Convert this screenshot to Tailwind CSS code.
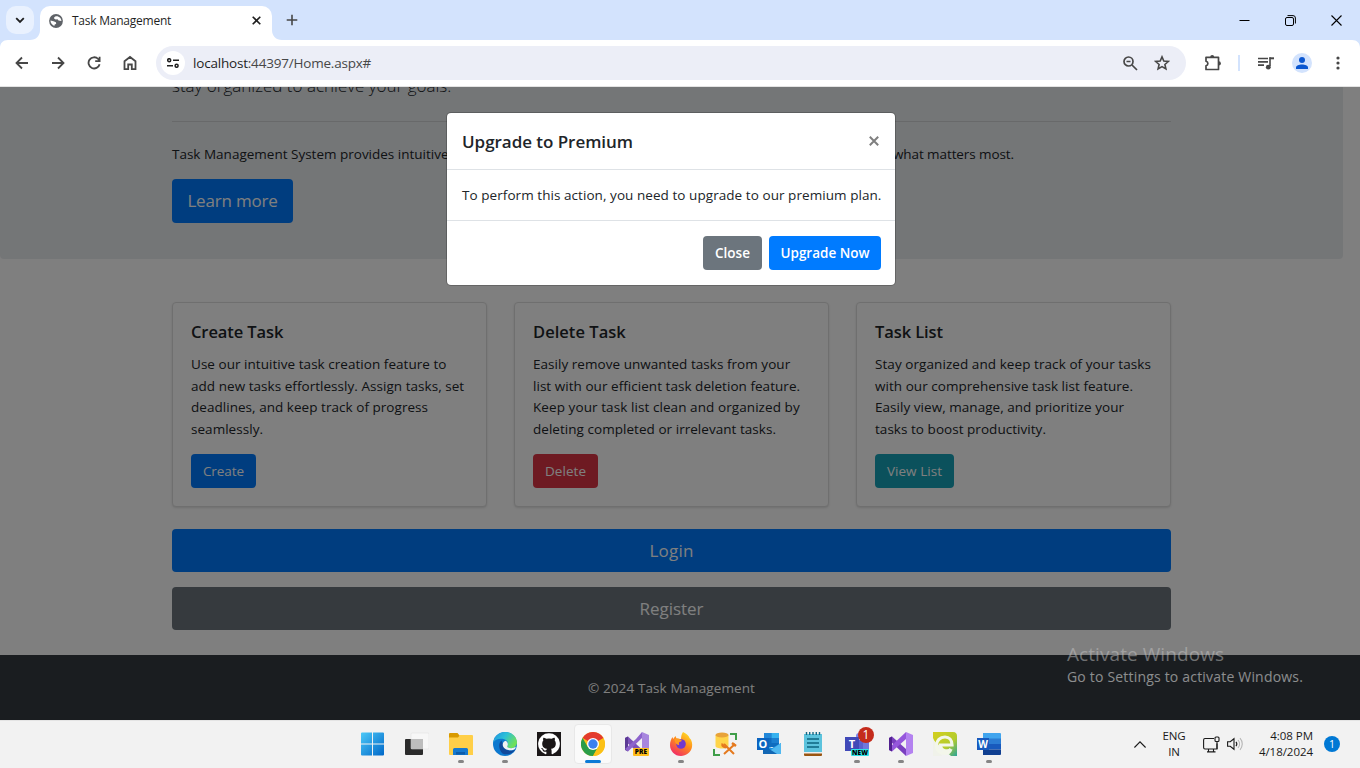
<!DOCTYPE html>
<html lang="en">
<head>
<meta charset="utf-8">
<title>Task Management</title>
<script src="https://cdn.jsdelivr.net/npm/@tailwindcss/browser@4"></script>
</head>
<body class="w-[1360px] h-[768px] overflow-hidden flex flex-col font-['Open_Sans','Noto_Sans',sans-serif] text-[13.5px] tracking-[0.04px] text-[#212529] whitespace-nowrap bg-white">

<!-- Tab strip -->
<header class="h-10 shrink-0 bg-[#d3e3fd] flex items-end">
  <div class="w-10 h-10 flex items-center justify-center relative">
    <div class="w-7 h-7 rounded-[10px] bg-[#e9f1fe] flex items-center justify-center">
      <svg class="w-[10px] h-[10px]" viewBox="0 0 10 10" fill="none" stroke="#1f1f1f" stroke-width="1.8"><path d="M1.2 3.2 5 7l3.800-3.800"/></svg>
    </div>
    <svg class="absolute right-0 bottom-0 w-[10px] h-[10px]" viewBox="0 0 10 10" fill="#fff"><path d="M10 0v10H0C6 10 10 6 10 0z"/></svg>
    <svg class="absolute left-0 -bottom-[8px] w-2 h-2 z-10" viewBox="0 0 8 8" fill="#d3e3fd"><path d="M0 0h8C3 0 0 3 0 8z"/></svg>
  </div>
  <div class="w-[232px] h-[34px] bg-white rounded-t-[10px] flex items-center pl-[9px] pr-[10px] pb-[5px]">
    <svg class="w-[14px] h-[14px]" viewBox="0 0 14 14"><circle cx="7" cy="7" r="6.9" fill="#5f6368"/><path d="M6.800 2.200 5.200 3.200v1.600l1.600.7 1.700-.3 1 1.300 2.900.500C12.600 4.600 10 1.700 6.800 2.200zM1.500 6.600 4.500 7.200l2.400 1 .3 1.500-1.700 1-.1 1.300C3.200 11.300 1.300 9 1.500 6.600z" fill="#fff"/></svg>
    <span class="ml-[9px] text-[12px] font-medium tracking-[-0.24px] flex-1 text-[#1f1f1f]">Task Management</span>
    <svg class="w-[9px] h-[9px] mr-[1px]" viewBox="0 0 9 9" stroke="#1f1f1f" stroke-width="1.600"><path d="M.7.7 8.300 8.300M8.300.7.700 8.300"/></svg>
  </div>
  <div class="flex-1 h-10 flex items-center relative">
    <svg class="absolute left-0 bottom-0 w-[10px] h-[10px]" viewBox="0 0 10 10" fill="#fff"><path d="M0 0v10h10C4 10 0 6 0 0z"/></svg>
    <svg class="ml-[14px] w-3 h-3" viewBox="0 0 12 12" stroke="#474747" stroke-width="1.600"><path d="M6 .7v10.600M.7 6h10.600"/></svg>
    <div class="ml-auto flex items-center pr-[18px]">
      <svg class="w-[11px] h-[11px]" viewBox="0 0 11 11" stroke="#000"><path d="M.5 5.500h10"/></svg>
      <svg class="w-[11px] h-[11px] ml-[35px]" viewBox="0 0 11 11" stroke="#000" fill="none"><rect x=".5" y="2.500" width="8" height="8" rx="1.500"/><path d="M2.500.6H8a2.400 2.400 0 0 1 2.400 2.400v5.500"/></svg>
      <svg class="w-[11px] h-[11px] ml-[35px]" viewBox="0 0 11 11" stroke="#000" stroke-width="1.100"><path d="M.5.5l10 10M10.500.5l-10 10"/></svg>
    </div>
    <svg class="absolute right-0 -bottom-[8px] w-2 h-2 z-10" viewBox="0 0 8 8" fill="#d3e3fd"><path d="M0 0h8v8C8 3 5 0 0 0z"/></svg>
  </div>
</header>

<!-- Address bar -->
<nav class="h-[47px] shrink-0 bg-white border-b border-[#e3e3e3] flex items-center pl-[15px] text-[#474747]">
  <svg class="w-[14px] h-[14px]" viewBox="0 0 14 14" fill="none" stroke="currentColor" stroke-width="1.800"><path d="M13 7H1.800M7 1.500 1.500 7 7 12.500"/></svg>
  <svg class="w-[14px] h-[14px] ml-[22px]" viewBox="0 0 14 14" fill="none" stroke="currentColor" stroke-width="1.800"><path d="M1 7h11.200M7 1.500 12.500 7 7 12.500"/></svg>
  <svg class="w-[14px] h-[14px] ml-[22px]" viewBox="0 0 14 14" fill="none" stroke="currentColor" stroke-width="1.800"><path d="M12.600 8.200A5.600 5.600 0 1 1 11.200 3L12.600 4.600M12.600.8v4.400H8.200"/></svg>
  <svg class="w-[14px] h-[16px] ml-[22px]" viewBox="0 0 14 16" fill="none" stroke="currentColor" stroke-width="1.800"><path d="M1.500 6.200 7 2l5.500 4.200v8H8.800V9.500H5.200v4.700H1.500z"/></svg>
  <div class="ml-[19px] w-[1030px] h-[34px] rounded-full bg-[#eceef7] flex items-center pl-[5px]">
    <div class="w-6 h-6 rounded-full bg-white flex items-center justify-center">
      <svg class="w-3 h-[10px]" viewBox="0 0 12 10" fill="none" stroke="#1f1f1f" stroke-width="1.500"><circle cx="2.200" cy="2.200" r="1.500"/><path d="M6 2.200h6M0 7.800h6"/><circle cx="9.600" cy="7.800" r="1.500"/></svg>
    </div>
    <span class="ml-2 text-[13.5px] tracking-[-0.2px] text-[#474747]"><span class="text-[#1f1f1f]">localhost</span>:44397/Home.aspx#</span>
    <svg class="ml-auto w-[15px] h-[15px]" viewBox="0 0 15 15" fill="none" stroke="currentColor" stroke-width="1.700"><circle cx="5.500" cy="5.500" r="4.500"/><path d="M9 9l5 5M3.500 5.500h4"/></svg>
    <svg class="ml-[16px] mr-4 w-[16px] h-[16px]" viewBox="0 0 16 16" fill="none" stroke="currentColor" stroke-width="1.600"><path d="m8 1.900 1.800 4.200 4.500.400-3.400 3 1 4.400L8 11.600l-3.900 2.300 1-4.400-3.400-3 4.500-.400z"/></svg>
  </div>
  <svg class="ml-[18px] w-[18px] h-[18px]" viewBox="0 0 18 18"><path d="M2 3.300h12.500v12.200H2v-3.800c2.500-.700 2.500-3.800 0-4.500z" fill="none" stroke="currentColor" stroke-width="1.700" stroke-linejoin="round"/><path d="M6.200 3a2 2 0 0 1 4 0z" fill="currentColor"/><path d="M14.800 7.300a2.100 2.100 0 0 1 0 4.200z" fill="currentColor"/></svg>
  <div class="ml-[16px] w-[2px] h-4 bg-[#d3e3fd]"></div>
  <svg class="ml-[18px] w-4 h-[13px]" viewBox="0 0 16 13"><path d="M0 1.500h10M0 4.800h10M0 8.100h6" stroke="currentColor" stroke-width="1.700"/><path d="M11.500 1.300H16" stroke="currentColor" stroke-width="2"/><path d="M12 .3v9" stroke="currentColor" stroke-width="1.600"/><circle cx="10.300" cy="10.200" r="2.400" fill="currentColor"/></svg>
  <div class="ml-[18px] w-5 h-5 rounded-full bg-[#d3e3fd] flex items-center justify-center">
    <svg class="w-3 h-3" viewBox="0 0 12 12" fill="#0b57d0"><circle cx="6" cy="3" r="3"/><path d="M0 12V10.500C0 8.500 3 7.500 6 7.500s6 1 6 3V12z"/></svg>
  </div>
  <svg class="ml-[24px] w-1 h-[14px]" viewBox="0 0 4 14" fill="currentColor"><circle cx="2" cy="2" r="1.600"/><circle cx="2" cy="7" r="1.600"/><circle cx="2" cy="12" r="1.600"/></svg>
</nav>

<!-- Page -->
<div class="relative h-[633px] shrink-0 overflow-hidden">
  <main class="h-[568px] flow-root">
    <section class="flow-root mr-[17px] h-[172px] bg-[#e9ecef] rounded-b-[4px] pl-[172px] pr-[172px]">
      <p class="-mt-[15px] h-[49px] leading-[27px] text-[17px] font-light tracking-normal">stay organized to achieve your goals.</p>
      <hr class="border-t border-[#d0d3d5]">
      <div class="mt-[21px] w-[842px] flex justify-between leading-[22px]"><span class="tracking-[0px]">Task Management System provides intuitive</span><span class="tracking-[-0.09px]">what matters most.</span></div>
      <a class="mt-[14px] w-[121px] h-[44px] rounded-[4px] bg-[#007bff] text-white flex items-center justify-center text-[17px] tracking-[-0.2px]">Learn more</a>
    </section>
    <section class="mt-[43px] mx-[172px] w-[999px] flex gap-[27px] leading-[21.6px]">
      <article class="w-[315px] h-[205px] bg-white border border-[#dfdfdf] rounded-[4px] shadow-sm px-[18px] pt-[18px]">
        <h5 class="text-[16.5px] leading-[22px] font-semibold tracking-[-0.1px] mb-[11px]">Create Task</h5>
        <p>Use our intuitive task creation feature to<br>add new tasks effortlessly. Assign tasks, set<br>deadlines, and keep track of progress<br>seamlessly.</p>
        <a class="mt-[14px] w-[65px] h-[34px] rounded-[4px] bg-[#007bff] text-white flex items-center justify-center tracking-[-0.06px]">Create</a>
      </article>
      <article class="w-[315px] h-[205px] bg-white border border-[#dfdfdf] rounded-[4px] shadow-sm px-[18px] pt-[18px]">
        <h5 class="text-[16.5px] leading-[22px] font-semibold tracking-[0.04px] mb-[11px]">Delete Task</h5>
        <p>Easily remove unwanted tasks from your<br>list with our efficient task deletion feature.<br><span class="tracking-[0.08px]">Keep your task list clean and organized by</span><br>deleting completed or irrelevant tasks.</p>
        <a class="mt-[14px] w-[65px] h-[34px] rounded-[4px] bg-[#dc3545] text-white flex items-center justify-center">Delete</a>
      </article>
      <article class="w-[315px] h-[205px] bg-white border border-[#dfdfdf] rounded-[4px] shadow-sm px-[18px] pt-[18px]">
        <h5 class="text-[16.5px] leading-[22px] font-semibold tracking-[-0.1px] mb-[11px]">Task List</h5>
        <p><span class="tracking-[0.07px]">Stay organized and keep track of your tasks</span><br>with our comprehensive task list feature.<br>Easily view, manage, and prioritize your<br>tasks to boost productivity.</p>
        <a class="mt-[14px] w-[79px] h-[34px] rounded-[4px] bg-[#17a2b8] text-white flex items-center justify-center">View List</a>
      </article>
    </section>
    <section class="mt-[22px] ml-[172px] w-[999px] flex flex-col gap-[15px] text-[17px] text-white">
      <a class="h-[43px] rounded-[4px] bg-[#007bff] flex items-center justify-center tracking-[0.19px]">Login</a>
      <a class="h-[43px] rounded-[4px] bg-[#6c757d] flex items-center justify-center tracking-[-0.03px]">Register</a>
    </section>
  </main>
  <footer class="h-[65px] bg-[#343a40] text-white flex items-center justify-center pr-[17px] pt-[1px] tracking-[0.11px]">© 2024 Task Management</footer>

  <!-- Backdrop -->
  <div class="absolute inset-0 bg-black/50"></div>

  <!-- Modal -->
  <div class="absolute left-[446px] top-[25px] w-[450px] h-[174px] rounded-[5px] bg-white bg-clip-padding border border-black/20 flex flex-col">
    <div class="h-[57px] border-b border-[#dee2e6] flex items-center justify-between pl-[15px] pr-[16px]">
      <h5 class="text-[17px] pt-px font-semibold tracking-[-0.04px]">Upgrade to Premium</h5>
      <svg class="w-[10px] h-[10px]" viewBox="0 0 10 10" stroke="#7f7f7f" stroke-width="2"><path d="M.8.8l8.400 8.400M9.200.8.800 9.200"/></svg>
    </div>
    <div class="h-[51px] border-b border-[#dee2e6] flex items-center pl-[15px] tracking-[0.06px]">To perform this action, you need to upgrade to our premium plan.</div>
    <div class="flex-1 flex items-center justify-end gap-[7px] pr-[14px] text-white font-semibold">
      <button class="w-[59px] h-[34px] rounded-[4px] bg-[#6c757d] tracking-[0px]">Close</button>
      <button class="w-[112px] h-[34px] rounded-[4px] bg-[#007bff] tracking-[0px]">Upgrade Now</button>
    </div>
  </div>

  <!-- Activation watermark -->
  <div class="absolute left-[1067px] top-[554px] text-white/40">
    <div class="text-[19px] leading-[26px] tracking-[0.07px] text-[#c4c4c4]/50">Activate Windows</div>
    <div class="text-[14px] leading-[20px] tracking-[0.19px] text-white/50">Go to Settings to activate Windows.</div>
  </div>
</div>

<!-- Taskbar -->
<footer class="h-12 shrink-0 bg-[#f2f2f2] border-t border-[#e4e4e4] flex pl-[351px]">
  <div class="w-11 flex flex-col items-center pt-[11px]">
    <svg class="w-6 h-6" viewBox="0 0 24 24"><defs><linearGradient id="w" x1="0" y1="0" x2="1" y2="1"><stop stop-color="#4cc9f8"/><stop offset="1" stop-color="#0067c8"/></linearGradient></defs><path d="M0 1.500a1 1 0 0 1 1-1h10v11H0zM12 .5h10a1 1 0 0 1 1 1v10H12zM0 12.500h11v11H1a1 1 0 0 1-1-1zM12 12.500h11v10a1 1 0 0 1-1 1H12z" fill="url(#w)"/></svg>
  </div>
  <div class="w-11 flex flex-col items-center pt-[11px]">
    <svg class="w-6 h-6" viewBox="0 0 24 24"><rect x="0" y="7" width="18" height="16" rx="1" fill="#2b2b2b"/><rect x="6" y="1" width="18" height="16" rx="1" fill="#f7f7f7" stroke="#ddd" stroke-width=".5"/><path d="M6 7h12v10H7a1 1 0 0 1-1-1z" fill="#bdbdbd"/></svg>
  </div>
  <div class="w-11 flex flex-col items-center pt-[11px]">
    <svg class="w-6 h-6" viewBox="0 0 24 24"><path d="M0 2a1 1 0 0 1 1-1h7.500L11 4v5H0z" fill="#d99a00"/><path d="M0 5.500h9L11 3h12a1 1 0 0 1 1 1v19H1a1 1 0 0 1-1-1z" fill="#ffcf48"/><path d="M4 23v-5.500A1.500 1.500 0 0 1 5.500 16h12a1.500 1.500 0 0 1 1.500 1.500V23z" fill="#1579cf"/><path d="M7 20h9v2.500H7z" fill="#0b5cab"/></svg>
    <i class="mt-[4px] w-[6px] h-[3px] rounded-full bg-[#858585]"></i>
  </div>
  <div class="w-11 flex flex-col items-center pt-[11px]">
    <svg class="w-6 h-6" viewBox="0 0 24 24"><defs><linearGradient id="e" x1="0" y1="0" x2="1" y2=".5"><stop stop-color="#1f8fe0"/><stop offset=".5" stop-color="#2bc0d8"/><stop offset="1" stop-color="#6fe05a"/></linearGradient></defs><circle cx="12" cy="12" r="12" fill="#0c78cf"/><path d="M.2 10.500C1 4.500 5.800 0 12 0c7 0 12 5 12 10.500 0 3.500-2.800 5.700-6 5.700-2.800 0-4.300-1-4-1.800 1.500-1.900 1.200-4.300-.5-5.800C10.500 6 3.500 6 .2 10.500z" fill="url(#e)"/><path d="M8.500 8.500C5.500 11 5 17 9.500 21.500c4.500 2 10 .5 13-4-5 2.500-11 1-12-4z" fill="#10489a"/><path d="M9.700 12.500c0-2 1.300-3.400 3-3.800 2.200 1.200 2.800 3.800 1.500 5.700-.300.800 1.200 1.800 4 1.800 1.500 0 3-.5 4.600-1.400l-.6 1.900c-1.500 1-2.700 1.500-5 1.500-4.200 0-7.500-2.500-7.500-5.700z" fill="#f2f2f2"/></svg>
    <i class="mt-[4px] w-[6px] h-[3px] rounded-full bg-[#858585]"></i>
  </div>
  <div class="w-11 flex flex-col items-center pt-[11px]">
    <svg class="w-6 h-6" viewBox="0 0 24 24"><path d="M0 0h24v24H0z" fill="#1b1718"/><path d="M12 1.300a10.700 10.700 0 0 0-3.400 20.900c.6.100.8-.200.8-.500v-2c-3 .6-3.600-1.300-3.600-1.300-.5-1.200-1.200-1.600-1.200-1.600-1-.700.100-.7.100-.7 1.100.1 1.600 1.100 1.600 1.100 1 1.700 2.500 1.200 3.100.9.100-.7.400-1.200.7-1.400-2.400-.3-4.900-1.200-4.900-5.300 0-1.200.4-2.100 1.100-2.900-.1-.3-.5-1.400.1-2.800 0 0 .9-.3 2.900 1.100a10 10 0 0 1 5.400 0c2-1.400 2.900-1.100 2.900-1.100.6 1.400.2 2.500.1 2.800.7.800 1.100 1.700 1.100 2.900 0 4.100-2.500 5-4.900 5.300.4.300.7 1 .7 2v3c0 .3.200.6.800.5A10.700 10.700 0 0 0 12 1.300z" fill="#fff"/></svg>
  </div>
  <div class="w-11 flex justify-center pt-[3px]">
    <div class="w-[38px] h-10 shrink-0 rounded-[4px] bg-[#fafafa] border border-[#e8e8e8] flex flex-col items-center pt-[7px]">
      <svg class="w-6 h-6 shrink-0" viewBox="0 0 24 24"><circle cx="12" cy="12" r="12" fill="#fbc116"/><path d="M12 12 1.600 6A12 12 0 0 1 22.400 6z" fill="#e33b2e"/><path d="M12 12 17.200 15 12 24A12 12 0 0 1 1.600 6l5.200 9z" fill="#2a9d48"/><path d="M12 6h10.400L17 15 12 24c8 0 12-6 12-12 0-2-.5-4-1.600-6z" fill="#fbc116"/><circle cx="12" cy="12" r="6" fill="#fff"/><circle cx="12" cy="12" r="4.700" fill="#3b80ee"/></svg>
      <i class="mt-[4px] w-4 h-[3px] shrink-0 rounded-full bg-[#0a7ad6]"></i>
    </div>
  </div>
  <div class="w-11 flex flex-col items-center pt-[11px]">
    <div class="relative w-6 h-6">
      <svg class="w-6 h-6" viewBox="0 0 24 24"><path d="M0 6 3 4.500 17 17.500V24L0 9z" fill="#7b51b8"/><path d="M0 6v12l3 1.500V4.500z" fill="#5b3a94"/><path d="M3 19.500 17 6V0l-6 7-11 10z" fill="#8d63cc"/><path d="M17 0l7 3v18l-7 3z" fill="#a786de"/></svg>
      <span class="absolute left-[8px] top-[16px] w-4 h-2 bg-[#ffbe1c] rounded-[1px] text-[6.5px] leading-[8px] font-extrabold tracking-[0.2px] text-center text-black">PRE</span>
    </div>
  </div>
  <div class="w-11 flex flex-col items-center pt-[11px]">
    <svg class="w-6 h-6" viewBox="0 0 24 24"><defs><linearGradient id="f" x1=".8" y1="0" x2=".2" y2="1"><stop stop-color="#ffe226"/><stop offset=".45" stop-color="#ff8a1c"/><stop offset="1" stop-color="#f0246e"/></linearGradient></defs><path d="M14 0c4 2 6 4 6.500 6 2.500 2 3 6 2.500 9-1 5.500-6 9-11 9C5.500 24 1 19 1 13c0-3 1-6 2.500-8l.7 2L6.500 4l1 2.500c2 0 3.500.2 4.500 1C12 5 12.500 2 14 0z" fill="url(#f)"/><circle cx="12" cy="12" r="4.800" fill="#7239d0"/><path d="M5.500 7c3-1 6 0 7.500 2-1 .5-2.500.8-3 1.500-.5 1 .5 2 0 2.500-1.500 0-3-1-4-3z" fill="#ff9a20"/></svg>
    <i class="mt-[4px] w-[6px] h-[3px] rounded-full bg-[#858585]"></i>
  </div>
  <div class="w-11 flex flex-col items-center pt-[11px]">
    <svg class="w-6 h-6" viewBox="0 0 24 24"><path d="M2.500 3v11c0 1.500 3 2.500 6.500 2.500s6.500-1 6.500-2.500V3z" fill="#ffd54a"/><ellipse cx="9" cy="3" rx="6.500" ry="2.500" fill="#e8a33a"/><path d="M17 2h6v6M1 17v6h6" fill="none" stroke="#3f9e49" stroke-width="2"/><path d="m11 12 10 10M22 12 11 22" stroke="#e57a1f" stroke-width="2"/><path d="M9.500 11.500a3 3 0 0 0 4 3.500M19 11l4 3" fill="none" stroke="#e57a1f" stroke-width="2.400"/></svg>
  </div>
  <div class="w-11 flex flex-col items-center pt-[11px]">
    <div class="relative w-6 h-6">
      <svg class="w-6 h-6" viewBox="0 0 24 24"><path d="M7 1h15v14H7z" fill="#0f6cbf"/><path d="M7 1h7.500v5H7z" fill="#2287d8"/><path d="M14.500 1H22v5h-7.500z" fill="#37b2ef"/><path d="M14.500 6H22v5h-7.500z" fill="#1b7fd0"/><path d="M6 13l9 3 9-5v11H6z" fill="#1b90dd"/><path d="M24 11v11H8z" fill="#50b8f0"/><path d="M6 13l14 9H6z" fill="#1267b4"/></svg>
      <span class="absolute left-0 top-[6px] w-3 h-3 bg-[#0b64c0] text-white text-[11px] leading-[12px] font-bold text-center">O</span>
    </div>
  </div>
  <div class="w-11 flex flex-col items-center pt-[11px]">
    <svg class="w-6 h-6" viewBox="0 0 24 24"><path d="M3 2h18v20H3z" fill="#5cc3dd"/><path d="M3 21h18v2a1 1 0 0 1-1 1H4a1 1 0 0 1-1-1z" fill="#9a5511"/><path d="M3 20h18v1.500H3z" fill="#eee"/><path d="M5.500 0v3M8.700 0v3M12 0v3M15.300 0v3M18.500 0v3" stroke="#176b87" stroke-width="1.400"/><path d="M6 7h12M6 11h12M6 15h12" stroke="#0d6680" stroke-width="1.500"/></svg>
  </div>
  <div class="w-11 flex flex-col items-center pt-[11px]">
    <div class="relative w-6 h-6">
      <svg class="w-6 h-6" viewBox="0 0 24 24"><circle cx="14" cy="4" r="3" fill="#7b83eb"/><path d="M14 8h10v9c0 3-2 5-4 5h-6z" fill="#7078de"/><path d="M6 8h12v10c0 6-12 6-12 0z" fill="#5b61cf"/></svg>
      <span class="absolute left-0 top-[5px] w-[14px] h-[14px] bg-[#4049b8] text-white text-[11px] leading-[13px] font-bold text-center">T</span>
      <span class="absolute left-[6px] top-[17px] w-[18px] h-[7px] bg-[#2ee0e6] rounded-[1px] text-[6.5px] leading-[7px] font-extrabold text-center text-black">NEW</span>
      <span class="absolute left-[13px] -top-[5px] w-4 h-4 rounded-full bg-[#c42b1c] text-white text-[12px] leading-[16px] text-center">1</span>
    </div>
    <i class="mt-[4px] w-[6px] h-[3px] rounded-full bg-[#858585]"></i>
  </div>
  <div class="w-11 flex flex-col items-center pt-[11px]">
    <svg class="w-6 h-6" viewBox="0 0 24 24"><path d="M0 6 3 4.500 17 17v7L0 8z" fill="#7a3fc0"/><path d="M3 19.500 17 7V0L0 16v2z" fill="#9556dc"/><path d="M0 6v12l3 1.500V4.500z" fill="#52218f"/><path d="M17 0l7 3v18l-7 3z" fill="#b482f0"/></svg>
    <i class="mt-[4px] w-[6px] h-[3px] rounded-full bg-[#858585]"></i>
  </div>
  <div class="w-11 flex flex-col items-center pt-[11px]">
    <svg class="w-6 h-6" viewBox="0 0 24 24"><defs><linearGradient id="g" x1="0" y1="0" x2="1" y2="1"><stop stop-color="#d5cf1e"/><stop offset=".6" stop-color="#b3cc2d"/><stop offset="1" stop-color="#2ba39a"/></linearGradient></defs><path d="M0 0h20c3 0 4 2 4 4v20h-6L0 8z" fill="url(#g)"/><path d="M0 6v18h9z" fill="#f0f2ea"/><path d="M18 17c-2 3-10 3-10.500-4h11.500c0-5-3-8-7-8-5 0-8.500 3.500-8.500 8.500s3.500 8 8.500 8c3 0 5-1.500 6-4.500" fill="none" stroke="#f3f6ea" stroke-width="3.200"/></svg>
  </div>
  <div class="w-11 flex flex-col items-center pt-[11px]">
    <div class="relative w-6 h-6">
      <svg class="w-6 h-6" viewBox="0 0 24 24"><path d="M6 1h17a1 1 0 0 1 1 1v5H6z" fill="#41a5ee"/><path d="M6 6.500h18V12H6z" fill="#2b7cd3"/><path d="M6 12h18v5.500H6z" fill="#185abd"/><path d="M6 17.500h18V22a1 1 0 0 1-1 1H6z" fill="#103f91"/></svg>
      <span class="absolute left-0 top-[6px] w-3 h-3 bg-[#185abd] text-white text-[10px] leading-[12px] font-bold flex justify-center">W</span>
    </div>
    <i class="mt-[4px] w-[6px] h-[3px] rounded-full bg-[#858585]"></i>
  </div>
  <div class="ml-auto flex items-center pr-5 pb-px text-[11.5px] leading-4 text-[#1a1a1a]">
    <svg class="w-3 h-[7px]" viewBox="0 0 12 7" fill="none" stroke="#1a1a1a" stroke-width="1.200"><path d="M.4 6.500 6 .9l5.600 5.600"/></svg>
    <div class="ml-4 w-6 text-center tracking-[-0.1px]">ENG<br>IN</div>
    <svg class="ml-[17px] w-[17px] h-[17px]" viewBox="0 0 17 17" fill="none" stroke="#1a1a1a" stroke-width="1.100"><path d="M11 2.500H2A1.500 1.500 0 0 0 .6 4v7.500A1.500 1.500 0 0 0 2 13h12V7.500M5.500 13v2.500M10.500 13v2.500M4 15.900h8.500"/><rect x="12" y="1" width="4" height="4.500" rx="1"/><path d="M14 5.500V13"/></svg>
    <svg class="ml-[7px] w-4 h-[14px]" viewBox="0 0 16 14" fill="none" stroke="#1a1a1a" stroke-width="1.100"><path d="M.6 4.800v4.400h2.600L7 12.300V1.700L3.200 4.800zM9 4.800c1 1.300 1 3.100 0 4.400"/><path d="M11 3c2 2.300 2 5.700 0 8M13 1.200c3 3.400 3 8.200 0 11.600" stroke="#b5b5b5"/></svg>
    <div class="ml-[14px] w-[56px] text-right tracking-[-0.04px]">4:08 PM<br>4/18/2024</div>
    <div class="ml-[11px] w-4 h-4 rounded-full bg-[#0078d4] text-white text-[10.5px] leading-4 text-center">1</div>
  </div>
</footer>
</body>
</html>
